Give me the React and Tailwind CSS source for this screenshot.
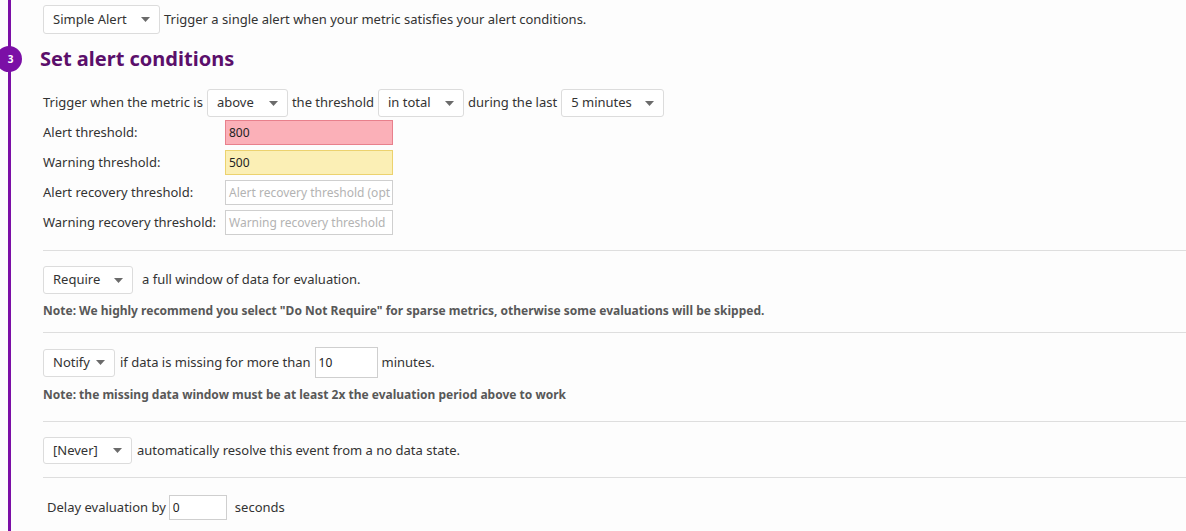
function Caret() {
  return (
    <svg width="9" height="5" viewBox="0 0 9 5" className="shrink-0">
      <path d="M0 0h9L4.5 5z" fill="#6b6b6b" />
    </svg>
  );
}

function Select({ value, width, h = 'h-[28px]' }) {
  return (
    <div
      className={`flex ${h} items-center justify-between rounded-[3px] border border-[#dcdcdc] bg-white pl-[9px] pr-[9px] text-[#333]`}
      style={{ width }}
    >
      <span>{value}</span>
      <Caret />
    </div>
  );
}

function Hr() {
  return <div className="h-px w-full bg-[#dedede]" />;
}

const inputs = [
  { label: 'Alert threshold:', value: '800', cls: 'bg-[#fbb0b8] border-[#e8808c] text-[#222]' },
  { label: 'Warning threshold:', value: '500', cls: 'bg-[#fbefb5] border-[#ecd26e] text-[#222]' },
  { label: 'Alert recovery threshold:', value: 'Alert recovery threshold (opt', cls: 'bg-white border-[#cfcfcf] text-[#b3b3b3]' },
  { label: 'Warning recovery threshold:', value: 'Warning recovery threshold', cls: 'bg-white border-[#cfcfcf] text-[#b3b3b3]' },
];

export default function App() {
  return (
    <div
      className="relative h-[531px] w-[1186px] overflow-hidden bg-[#fdfdfd] text-[13px] text-[#333]"
      style={{ fontFamily: '"Noto Sans", "Open Sans", sans-serif' }}
    >
      <div className="ml-[8px] h-full border-l-[3px] border-[#7b0fa6] pl-[32px] pt-[5px]">
        <div className="flex items-center gap-[4px]">
          <Select value="Simple Alert" width={117} h="h-[29px]" />
          <span>Trigger a single alert when your metric satisfies your alert conditions.</span>
        </div>

        <h2 className="ml-[-3px] mt-[12px] h-[26px] text-[20px] font-bold leading-[26px] text-[#5b0f6b]">
          Set alert conditions
        </h2>

        <div className="mt-[17px] flex items-center gap-[4px] whitespace-nowrap">
          <span>Trigger when the metric is</span>
          <Select value="above" width={81} />
          <span>the threshold</span>
          <Select value="in total" width={86} />
          <span>during the last</span>
          <Select value="5 minutes" width={103} />
        </div>

        <div className="mt-[3px] flex flex-col gap-[5px]">
          {inputs.map((r) => (
            <div key={r.label} className="flex items-center">
              <span className="w-[182px]">{r.label}</span>
              <div
                className={`flex h-[25px] w-[168px] items-center overflow-hidden whitespace-nowrap border px-[3px] text-[12px] ${r.cls}`}
              >
                {r.value}
              </div>
            </div>
          ))}
        </div>

        <div className="mt-[15px]">
          <Hr />
        </div>

        <div className="mt-[15px] flex items-center gap-[9px]">
          <Select value="Require" width={90} />
          <span>a full window of data for evaluation.</span>
        </div>
        <p className="mt-[8px] text-[12px] font-bold text-[#585858]">
          Note: We highly recommend you select "Do Not Require" for sparse metrics, otherwise some evaluations will be skipped.
        </p>
        <div className="mt-[12px]">
          <Hr />
        </div>

        <div className="mt-[14px] flex items-center gap-[5px]">
          <Select value="Notify" width={72} />
          <span>if data is missing for more than</span>
          <div className="ml-[-1px] flex h-[31px] w-[63px] items-center border border-[#cfcfcf] bg-white px-[3px] text-[12px] text-[#222]">
            10
          </div>
          <span className="ml-[-1px]">minutes.</span>
        </div>
        <p className="mt-[8px] text-[12px] font-bold text-[#585858]">
          Note: the missing data window must be at least 2x the evaluation period above to work
        </p>
        <div className="mt-[17px]">
          <Hr />
        </div>

        <div className="mt-[15px] flex items-center gap-[5px]">
          <Select value="[Never]" width={89} h="h-[27px]" />
          <span>automatically resolve this event from a no data state.</span>
        </div>
        <div className="mt-[13px]">
          <Hr />
        </div>

        <div className="mt-[17px] flex items-center pl-[4px]">
          <span>Delay evaluation by</span>
          <div className="ml-[3px] flex h-[25px] w-[58px] items-center border border-[#cfcfcf] bg-white px-[3px] text-[12px] text-[#222]">
            0
          </div>
          <span className="ml-[8px]">seconds</span>
        </div>
      </div>

      <div className="absolute left-[-4px] top-[46px] flex h-[26px] w-[26px] items-center justify-center rounded-full bg-[#7b0fa6] pl-[3px] text-[10px] font-bold text-white">
        3
      </div>
    </div>
  );
}
